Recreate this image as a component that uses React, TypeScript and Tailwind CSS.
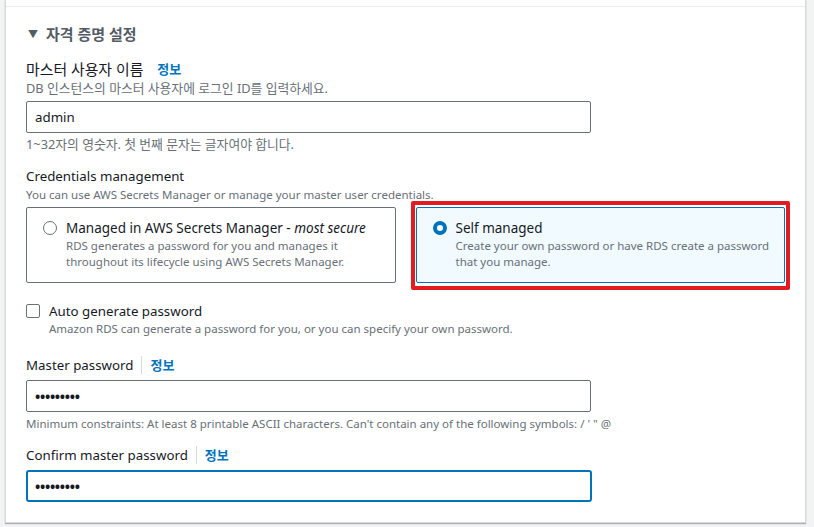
import React from "react";

const font = { fontFamily: '"Noto Sans", "Noto Sans CJK KR", sans-serif' };

function InfoLink({ divider }: { divider?: boolean }) {
  return (
    <>
      {divider && <span className="mx-2 h-[18px] w-px bg-[#d5dbdb]" />}
      <a className="text-[13px] font-bold text-[#0073bb]" style={{ marginLeft: divider ? 0 : 14 }}>
        정보
      </a>
    </>
  );
}

function Radio({ checked }: { checked?: boolean }) {
  if (checked) {
    return <span className="mt-[3px] h-[14px] w-[14px] shrink-0 rounded-full border-[4px] border-[#0073bb] bg-white" />;
  }
  return <span className="mt-[3px] h-[14px] w-[14px] shrink-0 rounded-full border-[1.5px] border-[#687078] bg-white" />;
}

function Choice({
  checked,
  title,
  desc,
}: {
  checked?: boolean;
  title: React.ReactNode;
  desc: React.ReactNode;
}) {
  return (
    <div
      className={
        "flex gap-[9px] rounded-[2px] border px-[16px] pt-[10px] pb-[12px] " +
        (checked ? "border-[#0073bb] bg-[#f1faff]" : "border-[#687078] bg-white")
      }
    >
      <Radio checked={checked} />
      <div className="whitespace-nowrap">
        <div className="text-[13.5px] leading-[20px] text-[#16191f]">{title}</div>
        <div className="text-[11.5px] leading-[16px] text-[#687078]">{desc}</div>
      </div>
    </div>
  );
}

export default function App() {
  return (
    <div className="min-h-screen bg-[#f2f3f3] pl-[5px]" style={font}>
      <div className="w-[801px] border-x border-b border-[#d5dbdb] bg-white shadow-[0_1px_1px_0_rgba(0,28,36,0.3)]">
        <div className="h-[7px] border-b border-[#eaeded]" />
        <div className="px-[20px] pt-[17px] pb-[20px]">
          {/* section header */}
          <div className="flex items-center gap-[8px] pl-[2px]">
            <span className="text-[10px] leading-[20px] text-[#545b64]">▼</span>
            <span className="text-[15px] font-semibold leading-[20px] text-[#545b64]">자격 증명 설정</span>
          </div>

          {/* master username */}
          <div className="mt-[15px] flex items-center text-[14.9px] leading-[20px] text-[#16191f]">
            <span>마스터 사용자 이름</span>
            <InfoLink />
          </div>
          <div className="mt-px text-[12.8px] leading-[16px] text-[#687078]">
            DB 인스턴스의 마스터 사용자에 로그인 ID를 입력하세요.
          </div>
          <input
            readOnly
            value="admin"
            className="mt-[5px] block h-[32px] w-[565px] rounded-[2px] border border-[#687078] px-[8px] text-[13.3px] text-[#16191f] outline-none"
            style={font}
          />
          <div className="mt-[3px] text-[12.8px] leading-[16px] text-[#687078]">
            1~32자의 영숫자. 첫 번째 문자는 글자여야 합니다.
          </div>

          {/* credentials management */}
          <div className="mt-[14px] text-[13.3px] leading-[20px] text-[#16191f]">Credentials management</div>
          <div className="mt-px text-[11.5px] leading-[16px] text-[#687078]">
            You can use AWS Secrets Manager or manage your master user credentials.
          </div>
          <div className="mt-[4px] grid w-[759px] grid-cols-2 gap-[20px]">
            <Choice
              title={
                <>
                  Managed in AWS Secrets Manager - <i>most secure</i>
                </>
              }
              desc={
                <>
                  RDS generates a password for you and manages it
                  <br />
                  throughout its lifecycle using AWS Secrets Manager.
                </>
              }
            />
            <div className="relative">
              <Choice
                checked
                title="Self managed"
                desc={
                  <>
                    Create your own password or have RDS create a password
                    <br />
                    that you manage.
                  </>
                }
              />
              <div className="pointer-events-none absolute -top-[6px] -right-[5px] -bottom-[7px] -left-[5px] rounded-[2px] border-4 border-[#e31b23]" />
            </div>
          </div>

          {/* auto generate */}
          <div className="mt-[18px] flex gap-[9px]">
            <span className="mt-[3px] h-[14px] w-[14px] shrink-0 rounded-[2px] border-[1.5px] border-[#687078] bg-white" />
            <div>
              <div className="text-[13.3px] leading-[20px] text-[#16191f]">Auto generate password</div>
              <div className="text-[11.5px] leading-[16px] text-[#687078]">
                Amazon RDS can generate a password for you, or you can specify your own password.
              </div>
            </div>
          </div>

          {/* master password */}
          <div className="mt-[18px] flex items-center text-[13.3px] leading-[20px] text-[#16191f]">
            <span>Master password</span>
            <InfoLink divider />
          </div>
          <div className="mt-[5px] flex h-[32px] w-[565px] items-center rounded-[2px] border border-[#687078] px-[8px] text-[14px] font-bold tracking-[-0.3px] text-[#16191f]">
            •••••••••
          </div>
          <div className="mt-[4px] text-[11.5px] leading-[16px] text-[#687078]">
            Minimum constraints: At least 8 printable ASCII characters. Can't contain any of the following symbols: / ' " @
          </div>

          {/* confirm password */}
          <div className="mt-[13px] flex items-center text-[13.3px] leading-[20px] text-[#16191f]">
            <span>Confirm master password</span>
            <InfoLink divider />
          </div>
          <div className="mt-[5px] flex h-[32px] w-[566px] items-center rounded-[3px] border-2 border-[#0073bb] px-[7px] text-[14px] font-bold tracking-[-0.3px] text-[#16191f]">
            •••••••••
          </div>
        </div>
      </div>
    </div>
  );
}
